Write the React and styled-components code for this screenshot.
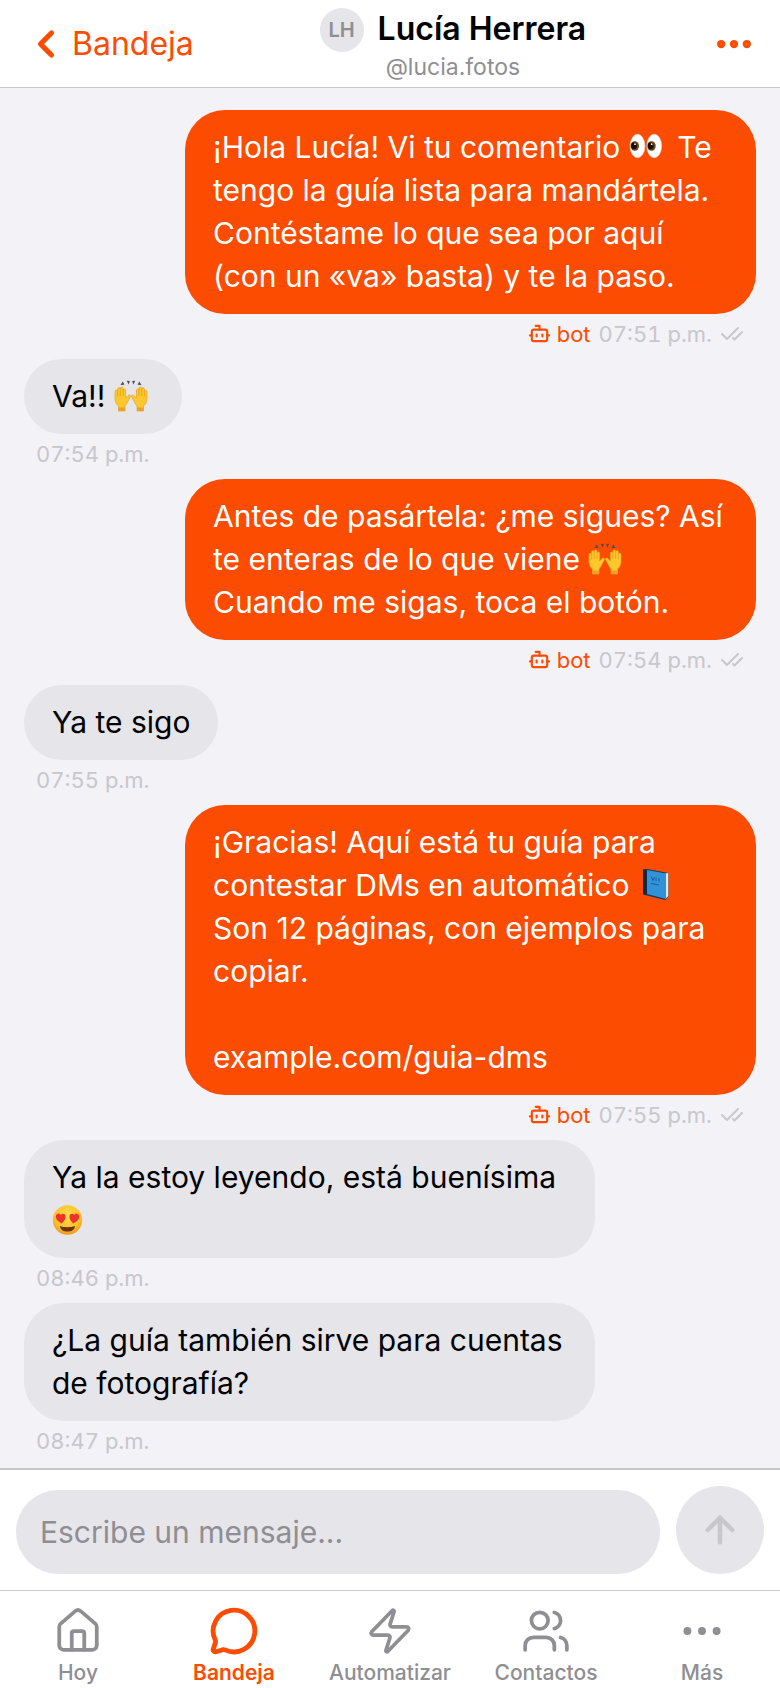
import { Fragment, useState } from 'react';
import styled, { createGlobalStyle, css } from 'styled-components';
import {
    ArrowUp,
    Bot,
    CheckCheck,
    ChevronLeft,
    Ellipsis,
    House,
    MessageCircle,
    Users,
    Zap,
} from 'lucide-react';

const colors = {
    accent: '#fc4c02',
    background: '#f2f2f7',
    surface: '#ffffff',
    fill: '#e5e5ea',
    separator: '#c6c6c8',
    muted: '#8e8e93',
    faint: '#c7c7cc',
};

const GlobalStyle = createGlobalStyle`
    * {
        box-sizing: border-box;
    }
    body {
        margin: 0;
        background-color: ${colors.background};
        color: #000;
        font-family: Inter, "Liberation Sans", sans-serif;
    }
    button, input {
        font-family: inherit;
    }
`;

const Page = styled.div`
    display: flex;
    flex-direction: column;
    min-height: 100vh;
`;

const iconButton = css`
    display: flex;
    align-items: center;
    padding: 0;
    border: 0;
    background: none;
    color: ${colors.accent};
    cursor: pointer;
`;

const Header = styled.header`
    display: flex;
    align-items: center;
    justify-content: space-between;
    height: 88px;
    padding: 0 24px;
    background-color: ${colors.surface};
    border-bottom: 1px solid ${colors.separator};
`;

const BackLink = styled.a`
    display: flex;
    align-items: center;
    gap: 4px;
    color: ${colors.accent};
    font-size: 32px;
    text-decoration: none;
`;

const Contact = styled.div`
    display: flex;
    flex-direction: column;
    align-items: center;
    padding-top: 2px;
`;

const ContactTop = styled.div`
    display: flex;
    gap: 14px;
`;

const Avatar = styled.span`
    display: flex;
    align-items: center;
    justify-content: center;
    width: 44px;
    height: 44px;
    border-radius: 50%;
    background-color: ${colors.fill};
    color: ${colors.muted};
    font-size: 20px;
    font-weight: 600;
`;

const Name = styled.h1`
    margin: 0;
    font-size: 32px;
    line-height: 42px;
    font-weight: 600;
`;

const Handle = styled.span`
    color: ${colors.muted};
    font-size: 23px;
    line-height: 30px;
`;

const Chat = styled.main`
    display: flex;
    flex: 1;
    flex-direction: column;
    padding: 22px 24px 0;
`;

const Message = styled.article`
    display: flex;
    flex-direction: column;
    align-items: ${(props) => (props.$mine ? 'flex-end' : 'flex-start')};
`;

const Bubble = styled.p`
    max-width: 78%;
    margin: 0;
    padding: 16px 28px;
    border-radius: 40px;
    background-color: ${(props) => (props.$mine ? colors.accent : colors.fill)};
    color: ${(props) => (props.$mine ? '#fff' : '#000')};
    font-size: 30px;
    line-height: 43px;
    white-space: pre-wrap;
`;

const Meta = styled.div`
    display: flex;
    align-items: center;
    gap: 8px;
    height: 45px;
    padding: 0 12px 6px;
    color: ${colors.faint};
    font-size: 22px;
    font-variant-numeric: tabular-nums;
`;

const BotTag = styled.span`
    display: flex;
    align-items: center;
    gap: 6px;
    color: ${colors.accent};
`;

const EmojiIcon = styled.svg`
    width: 40px;
    height: 36px;
    vertical-align: -6px;
`;

const Composer = styled.form`
    display: flex;
    align-items: flex-end;
    gap: 16px;
    padding: 16px;
    background-color: ${colors.surface};
    border-top: 2px solid ${colors.separator};
`;

const MessageInput = styled.input`
    flex: 1;
    min-width: 0;
    height: 84px;
    padding: 0 24px;
    border: 0;
    border-radius: 42px;
    background-color: ${colors.fill};
    color: #000;
    font-size: 30px;
    &::placeholder {
        color: ${colors.muted};
        opacity: 1;
    }
`;

const MoreButton = styled.button`
    ${iconButton}
`;

const SendButton = styled.button`
    ${iconButton}
    justify-content: center;
    width: 88px;
    height: 88px;
    border-radius: 50%;
    background-color: ${colors.fill};
    color: ${colors.faint};
`;

const TabBar = styled.nav`
    display: grid;
    grid-template-columns: repeat(5, 1fr);
    height: 98px;
    padding-top: 15px;
    background-color: ${colors.surface};
    border-top: 1px solid ${colors.separator};
`;

const Tab = styled.a`
    display: flex;
    flex-direction: column;
    align-items: center;
    gap: 5px;
    color: ${(props) => (props.$active ? colors.accent : colors.muted)};
    font-size: 21px;
    line-height: 24px;
    font-weight: ${(props) => (props.$active ? 600 : 500)};
    text-decoration: none;
`;

const Eyes = () => (
    <EmojiIcon viewBox="0 0 40 36" role="img" aria-label="👀">
        <ellipse cx="8.500" cy="18" rx="7.400" ry="11.800" fill="#fff" stroke="#d9d3d0" strokeWidth=".6" />
        <ellipse cx="25.200" cy="18" rx="7.400" ry="11.800" fill="#fff" stroke="#d9d3d0" strokeWidth=".6" />
        <ellipse cx="5.800" cy="18" rx="4.200" ry="4.800" fill="#6b4716" />
        <ellipse cx="22.500" cy="18" rx="4.200" ry="4.800" fill="#6b4716" />
        <ellipse cx="5" cy="17.800" rx="2.800" ry="3.400" fill="#140b04" />
        <ellipse cx="21.700" cy="17.800" rx="2.800" ry="3.400" fill="#140b04" />
        <circle cx="6" cy="16.200" r=".9" fill="#fff" />
        <circle cx="22.700" cy="16.200" r=".9" fill="#fff" />
    </EmojiIcon>
);

const handPath =
    'M4.500 34V29C2 27 1 24.500 1 21v-6.500c0-1.800 2.400-1.800 2.600 0V12c.1-1.800 2.600-1.800 2.700 0v-.8c.2-1.800 2.700-1.700 2.800.1V13c.3-1.500 2.500-1.300 2.500.4V21l2.600-2.600c1.300-1.200 3 .2 2 1.700L12.500 27l-1.500 2v5z';

const Hand = () => (
    <>
        <path d={handPath} fill="#fdc72e" stroke="#e9a31b" strokeWidth=".7" />
        <path d="M3.600 14.500v5M6.300 12v7M9.100 12v7" stroke="#e09a1c" strokeWidth=".7" fill="none" />
        <path d="M4.600 30.500h6.300V34H4.600z" fill="#e9a22a" />
    </>
);

const RaisedHands = () => (
    <EmojiIcon viewBox="0 0 40 36" role="img" aria-label="🙌">
        <Hand />
        <g transform="matrix(-1 0 0 1 34 0)">
            <Hand />
        </g>
        <path d="M6.500 8l2.300-3.500 1.600 3.200zM12.800 3.800l3 .2-1.200 3.400zM18.200 4l3-.2-1.800 3.600zM27.500 8l-2.300-3.500-1.600 3.200z" fill="#4b4b52" />
    </EmojiIcon>
);

const BlueBook = () => (
    <EmojiIcon viewBox="0 0 40 36" role="img" aria-label="📘">
        <path d="M5 3.500L9 3l21.500 4v23.500L27 34 5 28.500z" fill="#173a5e" />
        <path d="M27 7.500l3.300-.4v23.200L27 33z" fill="#e6e6e2" />
        <path d="M9 4l19 3.500V33L9 28z" fill="#3292d8" />
        <path d="M5 3.500L9 4v24.500l-4-.6z" fill="#102a42" />
        <path d="M13 10.500l2 4 1.500-3.500M18 11.500v3.500M21 12v3.500M13 17.500l8 1.500" stroke="#1d5e96" strokeWidth="1" fill="none" />
    </EmojiIcon>
);

const HeartEyes = () => (
    <EmojiIcon viewBox="0 0 40 36" role="img" aria-label="😍">
        <defs>
            <radialGradient id="face" cx=".5" cy=".35" r=".65">
                <stop offset="0" stopColor="#ffe04a" />
                <stop offset=".7" stopColor="#fdc02a" />
                <stop offset="1" stopColor="#ee9718" />
            </radialGradient>
        </defs>
        <circle cx="15.500" cy="19" r="14.700" fill="url(#face)" />
        <path d="M8 25c4 1.600 11 1.600 15 0-.4 4-3.400 5.600-7.500 5.600S8.400 29 8 25z" fill="#6b3410" />
        <path d="M9.800 22.500C6 20.500 3 18 4 14.600c.8-2.400 3.600-2.700 4.700-.6 1.500-2 4.500-1.300 4.800 1.200.3 2.600-1.500 5-3.700 7.300z" fill="#f0322f" />
        <path d="M21.200 22.500c3.800-2 6.800-4.500 5.800-7.900-.8-2.400-3.600-2.700-4.700-.6-1.500-2-4.500-1.300-4.800 1.200-.3 2.600 1.500 5 3.700 7.300z" fill="#f0322f" />
    </EmojiIcon>
);

const EMOJIS = {
    '👀': Eyes,
    '🙌': RaisedHands,
    '📘': BlueBook,
    '😍': HeartEyes,
};

const MESSAGES = [
    {
        id: 1,
        mine: true,
        time: '07:51 p.m.',
        text: '¡Hola Lucía! Vi tu comentario 👀 Te tengo la guía lista para mandártela. Contéstame lo que sea por aquí (con un «va» basta) y te la paso.',
    },
    { id: 2, time: '07:54 p.m.', text: 'Va!! 🙌' },
    {
        id: 3,
        mine: true,
        time: '07:54 p.m.',
        text: 'Antes de pasártela: ¿me sigues? Así te enteras de lo que viene 🙌\nCuando me sigas, toca el botón.',
    },
    { id: 4, time: '07:55 p.m.', text: 'Ya te sigo' },
    {
        id: 5,
        mine: true,
        time: '07:55 p.m.',
        text: '¡Gracias! Aquí está tu guía para contestar DMs en automático 📘\nSon 12 páginas, con ejemplos para copiar.\n\nexample.com/guia-dms',
    },
    { id: 6, time: '08:46 p.m.', text: 'Ya la estoy leyendo, está buenísima 😍' },
    { id: 7, time: '08:47 p.m.', text: '¿La guía también sirve para cuentas de fotografía?' },
];

const TABS = [
    { label: 'Hoy', Icon: House },
    { label: 'Bandeja', Icon: MessageCircle, active: true },
    { label: 'Automatizar', Icon: Zap },
    { label: 'Contactos', Icon: Users },
    { label: 'Más', Icon: Ellipsis },
];

function renderText(text) {
    return text.split(/(👀|🙌|📘|😍)/u).map((part, index) => {
        const Emoji = EMOJIS[part];
        return Emoji ? <Emoji key={index} /> : <Fragment key={index}>{part}</Fragment>;
    });
}

function ChatMessage({ mine, text, time }) {
    return (
        <Message $mine={mine}>
            <Bubble $mine={mine}>{renderText(text)}</Bubble>
            <Meta>
                {mine && (
                    <BotTag>
                        <Bot size={23} strokeWidth={2.2} />
                        bot
                    </BotTag>
                )}
                <time>{time}</time>
                {mine && <CheckCheck size={24} strokeWidth={2} />}
            </Meta>
        </Message>
    );
}

function App() {
    const [draft, setDraft] = useState('');
    return (
        <Page>
            <GlobalStyle />
            <Header>
                <BackLink href="#bandeja">
                    <ChevronLeft size={44} strokeWidth={2.8} />
                    Bandeja
                </BackLink>
                <Contact>
                    <ContactTop>
                        <Avatar>LH</Avatar>
                        <Name>Lucía Herrera</Name>
                    </ContactTop>
                    <Handle>@lucia.fotos</Handle>
                </Contact>
                <MoreButton type="button" aria-label="Más opciones">
                    <Ellipsis size={44} strokeWidth={2.5} />
                </MoreButton>
            </Header>
            <Chat>
                {MESSAGES.map((message) => (
                    <ChatMessage key={message.id} {...message} />
                ))}
            </Chat>
            <Composer onSubmit={(event) => event.preventDefault()}>
                <MessageInput
                    aria-label="Mensaje"
                    placeholder="Escribe un mensaje..."
                    value={draft}
                    onChange={(event) => setDraft(event.target.value)}
                />
                <SendButton type="submit" aria-label="Enviar">
                    <ArrowUp size={42} strokeWidth={2.6} />
                </SendButton>
            </Composer>
            <TabBar>
                {TABS.map(({ label, Icon, active }) => (
                    <Tab key={label} href={`#${label.toLowerCase()}`} $active={active}>
                        <Icon size={50} strokeWidth={active ? 2.3 : 1.8} />
                        {label}
                    </Tab>
                ))}
            </TabBar>
        </Page>
    );
}

export default App;
